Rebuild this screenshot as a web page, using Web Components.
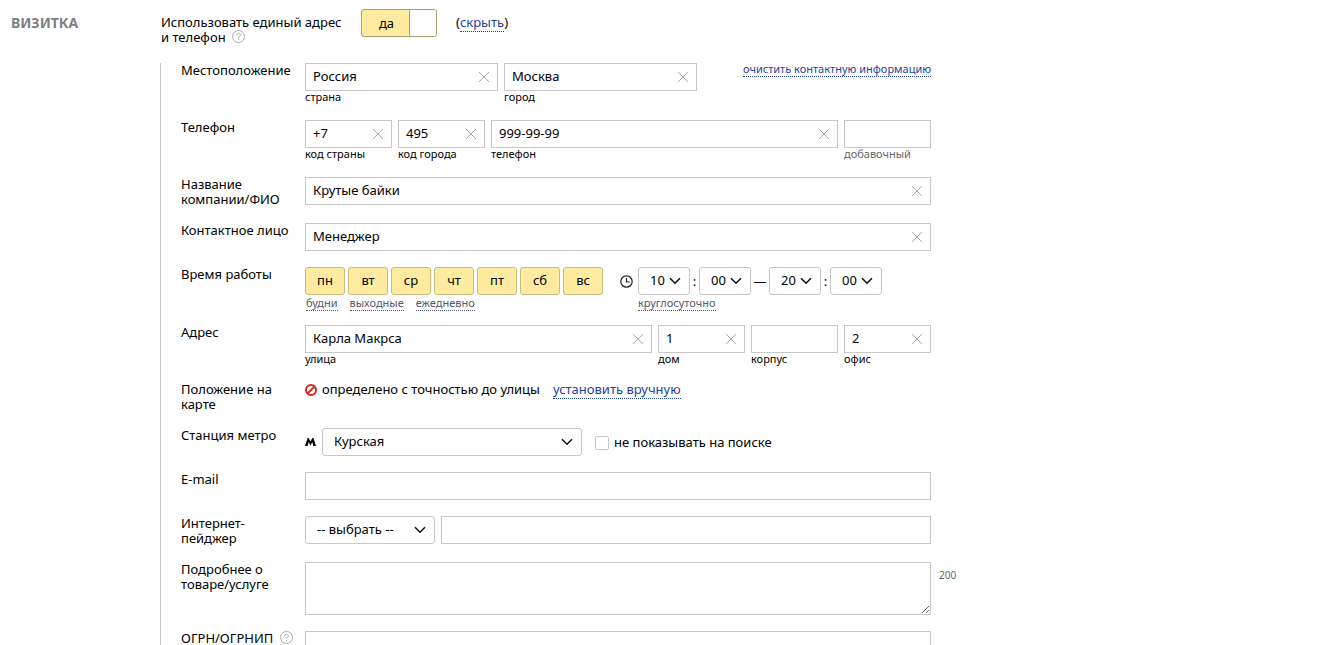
<!DOCTYPE html>
<html lang="ru">
<head>
<meta charset="utf-8">
<meta name="viewport" content="width=device-width, initial-scale=1">
<title>Визитка</title>
<style>
  body {
    margin: 0;
    background: #fff;
    color: #000;
    font: 13px/15px "Noto Sans", "Open Sans", sans-serif;
    --line: #c8c8c8;
    --link: #1e429f;
    --accent: #ffeba0;
    --accent-line: #c8bc80;
  }
</style>
</head>
<body>
<vcard-page></vcard-page>

<template id="t-page">
  <style>
    :host { display: block; }
    main { display: grid; grid-template-columns: 149px minmax(0, 1fr); padding: 9px 11px 0; }
    h2 { margin: 0; padding-top: 6px; font-size: 14px; line-height: 15px; font-weight: 700; color: #7f7f7f; }
    .head { display: flex; min-height: 54px; align-items: flex-start; padding-left: 1px; }
    .head label { width: 190px; padding-top: 6px; margin-right: 10px; }
    .head p { margin: 0 0 0 19px; padding-top: 6px; }
    .body { border-left: 1px solid var(--line); padding: 0 0 16px 20px; display: grid; gap: 16px; }
    .fields { display: flex; gap: 6px; align-items: flex-start; }
    .half { flex: 0 1 193px; }
    .short { flex: 0 1 87px; }
    .long { flex: 1 1 0; }
    .end { margin-left: auto; }
    .note { display: flex; align-items: center; gap: 5px; }
    .note pseudo-link { margin-left: 8px; }
    .metro { align-items: center; }
    .metro tick-box { margin-left: 7px; }
    .metro-station { flex: 0 1 260px; }
    .pager { flex: 0 1 130px; }
  </style>
  <main>
    <h2>ВИЗИТКА</h2>
    <section>
      <div class="head">
        <label for="common">Использовать единый адрес и&nbsp;телефон <help-icon></help-icon></label>
        <on-off id="common"></on-off>
        <p>(<pseudo-link>скрыть</pseudo-link>)</p>
      </div>
      <div class="body">
        <form-row>
          <span slot="label">Местоположение</span>
          <div class="fields">
            <text-field class="half" value="Россия" hint="страна"></text-field>
            <text-field class="half" value="Москва" hint="город"></text-field>
            <pseudo-link class="end" size="small">очистить контактную информацию</pseudo-link>
          </div>
        </form-row>
        <form-row>
          <span slot="label">Телефон</span>
          <div class="fields">
            <text-field class="short" value="+7" hint="код страны"></text-field>
            <text-field class="short" value="495" hint="код города"></text-field>
            <text-field class="long" value="999-99-99" hint="телефон"></text-field>
            <text-field class="short" hint="добавочный" muted></text-field>
          </div>
        </form-row>
        <form-row>
          <label slot="label" for="company">Название компании/ФИО</label>
          <text-field id="company" value="Крутые байки" name="Название компании/ФИО"></text-field>
        </form-row>
        <form-row>
          <label slot="label" for="person">Контактное лицо</label>
          <text-field id="person" value="Менеджер" name="Контактное лицо"></text-field>
        </form-row>
        <form-row>
          <span slot="label">Время работы</span>
          <work-time></work-time>
        </form-row>
        <form-row>
          <span slot="label">Адрес</span>
          <div class="fields">
            <text-field class="long" value="Карла Макрса" hint="улица"></text-field>
            <text-field class="short" value="1" hint="дом"></text-field>
            <text-field class="short" hint="корпус"></text-field>
            <text-field class="short" value="2" hint="офис"></text-field>
          </div>
        </form-row>
        <form-row>
          <span slot="label">Положение на карте</span>
          <div class="note">
            <svg width="12" height="12" viewBox="0 0 12 12" fill="none" stroke="#d0281f" stroke-width="2" aria-hidden="true"><circle cx="6" cy="6" r="5"/><path d="M2.8 9.2 9.2 2.8"/></svg>
            <span>определено с точностью до улицы</span>
            <pseudo-link>установить вручную</pseudo-link>
          </div>
        </form-row>
        <form-row>
          <label slot="label" for="metro">Станция метро</label>
          <div class="fields metro">
            <svg width="11" height="8" viewBox="0 0 11 8" aria-hidden="true"><path d="M0 8 2.600 0H3.600L5.500 3.600 7.400 0h1L11 8H8.400L7.300 4 5.500 7.600 3.700 4 2.600 8z"/></svg>
            <drop-down id="metro" class="metro-station" options="Курская" name="Станция метро"></drop-down>
            <tick-box>не показывать на поиске</tick-box>
          </div>
        </form-row>
        <form-row>
          <label slot="label" for="email">E-mail</label>
          <text-field id="email" name="E-mail"></text-field>
        </form-row>
        <form-row>
          <label slot="label" for="pager">Интернет-пейджер</label>
          <div class="fields">
            <drop-down id="pager" class="pager" options="-- выбрать --" name="Интернет-пейджер"></drop-down>
            <text-field class="long" name="Номер или логин"></text-field>
          </div>
        </form-row>
        <form-row>
          <label slot="label" for="details">Подробнее о товаре/услуге</label>
          <text-block id="details" name="Подробнее о товаре/услуге"></text-block>
          <span slot="aside">200</span>
        </form-row>
        <form-row>
          <label slot="label" for="ogrn">ОГРН/ОГРНИП <help-icon></help-icon></label>
          <text-field id="ogrn" name="ОГРН/ОГРНИП"></text-field>
        </form-row>
      </div>
    </section>
  </main>
</template>

<template id="t-row">
  <style>
    :host { display: grid; grid-template-columns: 114px minmax(0, 636px) auto; justify-content: start; }
    .content { margin-left: 10px; }
    .aside { margin-left: 8px; padding-top: 6px; font-size: 10px; color: #666; }
  </style>
  <div><slot name="label"></slot></div>
  <div class="content"><slot></slot></div>
  <div class="aside"><slot name="aside"></slot></div>
</template>

<template id="t-field">
  <style>
    :host { display: block; min-width: 0; }
    .box { box-sizing: border-box; height: 28px; display: flex; border: 1px solid var(--line); }
    input { flex: 1; min-width: 0; width: 0; margin: 0; padding: 0 7px 2px; border: 0; outline: 0; background: none; color: inherit; font: inherit; }
    .box:focus-within { border-color: #888; }
    button { width: 26px; padding: 0; border: 0; background: none; display: grid; place-items: center; cursor: pointer; }
    button[hidden] { display: none; }
    label { display: block; padding-bottom: 2px; font-size: 11px; line-height: 11px; }
    :host([muted]) label { color: #666; }
  </style>
  <div class="box">
    <input id="i" type="text" autocomplete="off">
    <button type="button" aria-label="Очистить" hidden><svg width="12" height="12" viewBox="0 0 12 12" fill="none" stroke="#aaa"><path d="M1 1l10 10M11 1 1 11"/></svg></button>
  </div>
</template>

<template id="t-block">
  <style>
    :host { display: block; }
    textarea { display: block; box-sizing: border-box; width: 100%; height: 53px; margin: 0; padding: 6px 7px; border: 1px solid var(--line); border-radius: 0; outline: 0; font: inherit; resize: vertical; }
  </style>
  <textarea></textarea>
</template>

<template id="t-drop">
  <style>
    :host { display: grid; min-width: 0; align-items: center; }
    select, svg { grid-area: 1 / 1; }
    select { appearance: none; box-sizing: border-box; width: 100%; height: 28px; margin: 0; padding: 0 11px 2px; border: 1px solid var(--line); border-radius: 3px; background: #fff; color: inherit; font: inherit; }
    svg { justify-self: end; margin-right: 9px; pointer-events: none; }
  </style>
  <select></select>
  <svg width="12" height="8" viewBox="0 0 12 8" fill="none" stroke="#111" stroke-width="1.6" aria-hidden="true"><path d="M1 1.200 6 6.200 11 1.200"/></svg>
</template>

<template id="t-tick">
  <style>
    :host { display: block; }
    label { display: flex; align-items: center; gap: 5px; }
    input { appearance: none; box-sizing: border-box; width: 14px; height: 14px; margin: 2px 0 0; border: 1px solid var(--line); border-radius: 2px; background: #fff; }
    input:checked { background: var(--accent); }
  </style>
  <label><input type="checkbox"><slot></slot></label>
</template>

<template id="t-link">
  <style>
    :host { display: inline-block; }
    :host([size=small]) { font-size: 11px; line-height: 12px; }
    :host([tone=gray]) { --link: #555b6b; font-size: 11px; line-height: 15px; }
    a { color: var(--link); text-decoration: none; border-bottom: 1px dotted currentColor; }
  </style>
  <a href="#"><slot></slot></a>
</template>

<template id="t-help">
  <style>
    :host { display: inline-block; height: 13px; vertical-align: -1px; margin-left: 3px; }
    svg { display: block; }
  </style>
  <svg width="13" height="13" viewBox="0 0 13 13" fill="none" stroke="#aaa" aria-hidden="true"><circle cx="6.500" cy="6.500" r="6"/><path d="M4.600 5.200C4.600 2.600 8.500 2.700 8.400 5 8.400 6.300 6.500 6.400 6.500 8M6.500 9v1.200"/></svg>
</template>

<template id="t-onoff">
  <style>
    :host { display: block; }
    button { box-sizing: border-box; width: 76px; height: 28px; padding: 0; display: grid; grid-template-columns: 1fr 27px; border: 1px solid #a89d68; border-radius: 3px; background: var(--accent); color: inherit; font: inherit; line-height: 26px; cursor: pointer; }
    i { height: 26px; box-sizing: border-box; border-left: 1px solid #a89d68; border-radius: 2px; background: #fff; }
    span { padding-left: 2px; }
  </style>
  <button type="button" role="switch" aria-checked="true"><span>да</span><i></i></button>
</template>

<template id="t-day">
  <style>
    :host { display: block; }
    button { box-sizing: border-box; width: 40px; height: 28px; padding: 0 0 2px; border: 1px solid var(--accent-line); border-radius: 3px; background: var(--accent); color: inherit; font: inherit; cursor: pointer; }
    button[aria-pressed=false] { background: #fff; border-color: var(--line); }
  </style>
  <button type="button" aria-pressed="true"><slot></slot></button>
</template>

<template id="t-time">
  <style>
    :host { display: grid; grid-template-columns: 298px 35px auto; justify-content: start; }
    .days { display: flex; gap: 3px; }
    .clock { display: grid; place-items: center start; padding-left: 17px; }
    .range { display: flex; align-items: center; }
    .range drop-down { width: 52px; }
    .range span { width: 9px; text-align: center; }
    .range .dash { width: 18px; }
    .quick { display: flex; gap: 12px; }
    .quick, .round { height: 14px; padding-left: 1px; }
    .round { grid-column: 3; padding-left: 0; }
  </style>
  <div class="days"><day-button>пн</day-button><day-button>вт</day-button><day-button>ср</day-button><day-button>чт</day-button><day-button>пт</day-button><day-button>сб</day-button><day-button>вс</day-button></div>
  <div class="clock"><svg width="13" height="13" viewBox="0 0 13 13" fill="none" stroke="#222" stroke-width="1.200" aria-hidden="true"><circle cx="6.500" cy="6.500" r="5.700"/><path d="M6.500 3v4H9.500"/></svg></div>
  <div class="range">
    <drop-down options="10" name="Начало, часы"></drop-down><span>:</span><drop-down options="00" name="Начало, минуты"></drop-down><span class="dash">—</span><drop-down options="20" name="Конец, часы"></drop-down><span>:</span><drop-down options="00" name="Конец, минуты"></drop-down>
  </div>
  <div class="quick"><pseudo-link tone="gray">будни</pseudo-link><pseudo-link tone="gray">выходные</pseudo-link><pseudo-link tone="gray">ежедневно</pseudo-link></div>
  <div class="round"><pseudo-link tone="gray">круглосуточно</pseudo-link></div>
</template>

<script>
  class Base extends HTMLElement {
    constructor() {
      super();
      this.attachShadow({ mode: "open", delegatesFocus: this.constructor.formAssociated === true });
      const t = document.getElementById(this.constructor.template);
      this.shadowRoot.append(document.importNode(t.content, true));
    }
    $(selector) { return this.shadowRoot.querySelector(selector); }
  }

  const simple = (tag, template) =>
    customElements.define(tag, class extends Base { static template = template; });

  simple("form-row", "t-row");
  simple("pseudo-link", "t-link");
  simple("help-icon", "t-help");
  simple("tick-box", "t-tick");

  customElements.define("text-field", class extends Base {
    static template = "t-field";
    static formAssociated = true;
    connectedCallback() {
      const input = this.$("input"), clear = this.$("button");
      const update = () => { clear.hidden = !input.value; };
      input.value = this.getAttribute("value") || "";
      if (this.hasAttribute("name")) input.setAttribute("aria-label", this.getAttribute("name"));
      if (this.hasAttribute("hint") && !this.$("label")) {
        const label = document.createElement("label");
        label.htmlFor = "i";
        label.textContent = this.getAttribute("hint");
        this.shadowRoot.append(label);
      }
      input.oninput = update;
      clear.onclick = () => { input.value = ""; update(); input.focus(); };
      update();
    }
  });

  customElements.define("text-block", class extends Base {
    static template = "t-block";
    static formAssociated = true;
    connectedCallback() { this.$("textarea").setAttribute("aria-label", this.getAttribute("name")); }
  });

  customElements.define("drop-down", class extends Base {
    static template = "t-drop";
    static formAssociated = true;
    connectedCallback() {
      const select = this.$("select");
      select.setAttribute("aria-label", this.getAttribute("name"));
      select.replaceChildren(...this.getAttribute("options").split("|").map(o => new Option(o)));
    }
  });

  customElements.define("on-off", class extends Base {
    static template = "t-onoff";
    static formAssociated = true;
    connectedCallback() {
      const b = this.$("button");
      b.setAttribute("aria-label", "Использовать единый адрес и телефон");
      b.onclick = () => {
        const on = b.getAttribute("aria-checked") !== "true";
        b.setAttribute("aria-checked", on);
        this.$("span").textContent = on ? "да" : "нет";
      };
    }
  });

  customElements.define("day-button", class extends Base {
    static template = "t-day";
    connectedCallback() {
      const b = this.$("button");
      b.onclick = () => b.setAttribute("aria-pressed", b.getAttribute("aria-pressed") !== "true");
    }
  });

  simple("work-time", "t-time");
  simple("vcard-page", "t-page");
</script>
</body>
</html>
